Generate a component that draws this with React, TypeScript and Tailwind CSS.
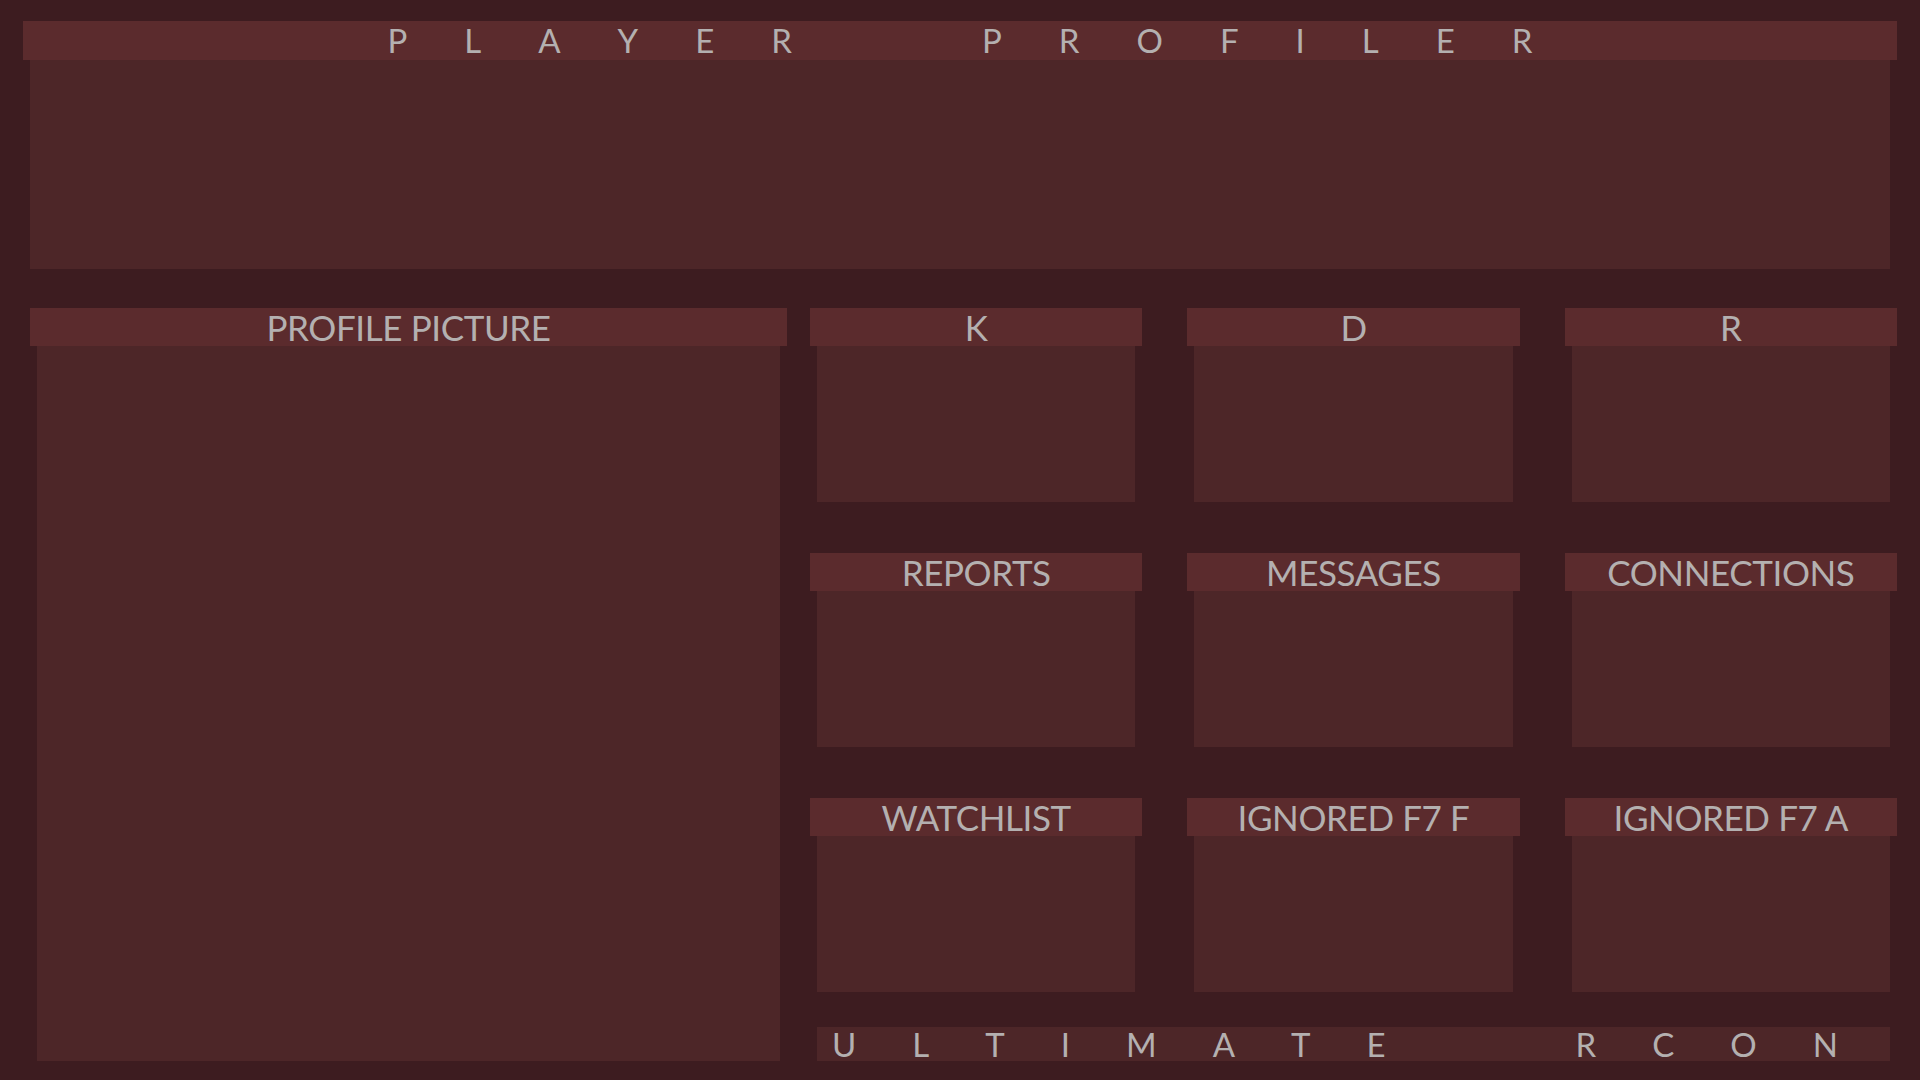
import type { ReactNode } from 'react';

const FONT = { fontFamily: 'Lato, "Open Sans", sans-serif' };

const TILES = [
  'K',
  'D',
  'R',
  'REPORTS',
  'MESSAGES',
  'CONNECTIONS',
  'WATCHLIST',
  'IGNORED F7 F',
  'IGNORED F7 A',
];

function Spaced({ words, wide }: { words: string[]; wide?: boolean }) {
  return (
    <div className={wide ? 'flex items-center gap-[190px]' : 'flex items-center gap-[190px]'}>
      {words.map((w) => (
        <span key={w} className={wide ? 'flex gap-[57px]' : 'flex gap-[56px]'}>
          {[...w].map((ch, i) => (
            <span key={i}>{ch}</span>
          ))}
        </span>
      ))}
    </div>
  );
}

function Header({ children }: { children: ReactNode }) {
  return (
    <div className="h-[38px] shrink-0 bg-[#5b2b2d] flex items-center justify-center text-[35px] tracking-[-0.4px] leading-none text-[#b4b0b0] whitespace-nowrap">
      {children}
    </div>
  );
}

function Tile({ label }: { label: string }) {
  return (
    <div className="flex flex-col">
      <Header>{label}</Header>
      <div className="mx-[7px] h-[156px] bg-[#4d2628]" />
    </div>
  );
}

export default function App() {
  return (
    <div className="w-full h-[1080px] overflow-hidden bg-[#3d1c20] pt-[21px] px-[23px]" style={FONT}>
      <div className="flex flex-col">
        <div className="h-[39px] bg-[#5b2b2d] flex items-center justify-center text-[33px] leading-none text-[#b4b0b0]">
          <Spaced words={['PLAYER', 'PROFILER']} wide />
        </div>
        <div className="mx-[7px] h-[209px] bg-[#4d2628]" />
      </div>

      <div className="mt-[39px] flex">
        <div className="ml-[7px] w-[757px] flex flex-col">
          <Header>PROFILE PICTURE</Header>
          <div className="mx-[7px] flex-1 bg-[#4d2628]" />
        </div>

        <div className="ml-[23px] flex-1 flex flex-col">
          <div className="grid grid-cols-3 gap-x-[45px] gap-y-[51px]">
            {TILES.map((t) => (
              <Tile key={t} label={t} />
            ))}
          </div>
          <div className="mt-[35px] mx-[7px] h-[34px] bg-[#4d2628] flex items-center pl-[15px] text-[33px] leading-none text-[#b4b0b0]">
            <Spaced words={['ULTIMATE', 'RCON']} />
          </div>
        </div>
      </div>
    </div>
  );
}
